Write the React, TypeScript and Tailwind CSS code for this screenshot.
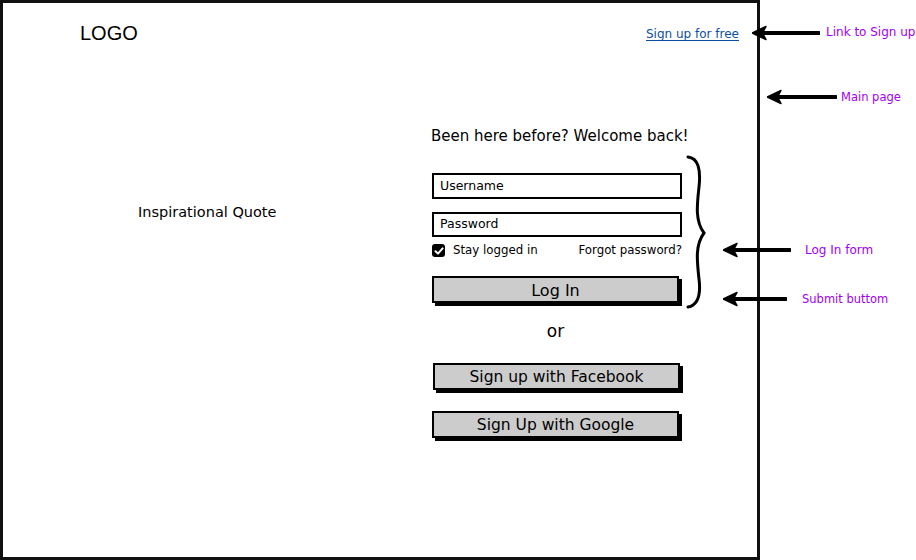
import React from 'react';

const sketch = { fontFamily: '"DejaVu Sans", "Noto Sans", sans-serif' };

const Arrow = ({ x, y, len }: { x: number; y: number; len: number }) => (
  <svg
    className="absolute"
    style={{ left: x, top: y - 8 }}
    width={len}
    height={16}
    viewBox={`0 0 ${len} 16`}
  >
    <line x1={8} y1={8} x2={len - 1} y2={8} stroke="#000" strokeWidth={4} strokeLinecap="round" />
    <path d="M0 8 L14 1.5 L10.5 8 L14 14.5 Z" fill="#000" stroke="#000" strokeWidth={1.5} strokeLinejoin="round" />
  </svg>
);

const Note = ({ x, y, children, size = 'text-[12px]' }: { x: number; y: number; children: React.ReactNode; size?: string }) => (
  <div
    className={`absolute whitespace-nowrap leading-4 text-[#a100f5] ${size}`}
    style={{ ...sketch, left: x, top: y - 8 }}
  >
    {children}
  </div>
);

const SketchButton = ({ label }: { label: string }) => (
  <button className="w-[247px] h-[27px] flex items-center justify-center pt-[2px] bg-[#cccccc] border-2 border-black shadow-[3px_3px_0_#000] text-black">
    {label}
  </button>
);

export default function App() {
  return (
    <div className="relative w-[916px] h-[560px] bg-white overflow-hidden" style={sketch}>
      {/* browser frame / main page */}
      <div className="w-[760px] h-[560px] border-[3px] border-[#111] flex flex-col">
        <header className="flex justify-between items-start pt-[20px] pl-[77px] pr-[18px] h-[123px]">
          <div className="text-[20px] leading-5 text-black" style={{ fontFamily: '"Liberation Sans", Arial, sans-serif' }}>
            LOGO
          </div>
          <a href="#" className="mt-[3px] text-[12px] leading-4 text-[#0b4f9f] underline underline-offset-2">
            Sign up for free
          </a>
        </header>

        <div className="flex">
          <div className="w-[429px] pl-[135px] pt-[76px]">
            <div className="text-[14.5px] leading-5 text-black whitespace-nowrap">Inspirational Quote</div>
          </div>

          <div className="w-[250px] flex flex-col text-black">
            <div className="text-[15px] leading-5 -ml-[1px] whitespace-nowrap">Been here before? Welcome back!</div>

            <div className="mt-[27px] h-[26px] border-2 border-black flex items-center pl-[6px] text-[12.5px]">Username</div>
            <div className="mt-[13px] h-[25px] border-2 border-black flex items-center pl-[6px] text-[12.5px]">Password</div>

            <div className="mt-[7px] h-[13px] flex items-center justify-between text-[11.8px] whitespace-nowrap">
              <div className="flex items-center gap-[8px]">
                <span className="w-[13px] h-[13px] rounded-[3px] bg-black flex items-center justify-center">
                  <svg width="10" height="10" viewBox="0 0 10 10">
                    <path d="M1.5 5.2 L4 7.6 L8.6 2.4" fill="none" stroke="#fff" strokeWidth="2" strokeLinecap="round" strokeLinejoin="round" />
                  </svg>
                </span>
                <span>Stay logged in</span>
              </div>
              <span>Forgot password?</span>
            </div>

            <div className="mt-[19px] text-[16px]">
              <SketchButton label="Log In" />
            </div>

            <div className="mt-[18px] w-[247px] text-center text-[17px] leading-5">or</div>

            <div className="mt-[22px] text-[15.5px] pl-[1px]">
              <SketchButton label="Sign up with Facebook" />
            </div>
            <div className="mt-[21px] text-[15.5px]">
              <SketchButton label="Sign Up with Google" />
            </div>
          </div>
        </div>
      </div>

      {/* annotations */}
      <svg className="absolute left-[686px] top-[155px]" width="22" height="154" viewBox="0 0 22 154">
        <path
          d="M2 2 C 12 3, 15 14, 13 32 C 11 50, 9 66, 18 78 C 9 90, 11 106, 13 124 C 15 140, 12 150, 2 152"
          fill="none"
          stroke="#000"
          strokeWidth="3"
          strokeLinecap="round"
        />
      </svg>

      <Arrow x={752} y={33} len={68} />
      <Note x={826} y={32}>Link to Sign up</Note>

      <Arrow x={767} y={97} len={70} />
      <Note x={841} y={97} size="text-[11.5px]">Main page</Note>

      <Arrow x={723} y={250} len={68} />
      <Note x={805} y={250}>Log In form</Note>

      <Arrow x={723} y={299} len={64} />
      <Note x={802} y={299} size="text-[11.5px]">Submit buttom</Note>
    </div>
  );
}
